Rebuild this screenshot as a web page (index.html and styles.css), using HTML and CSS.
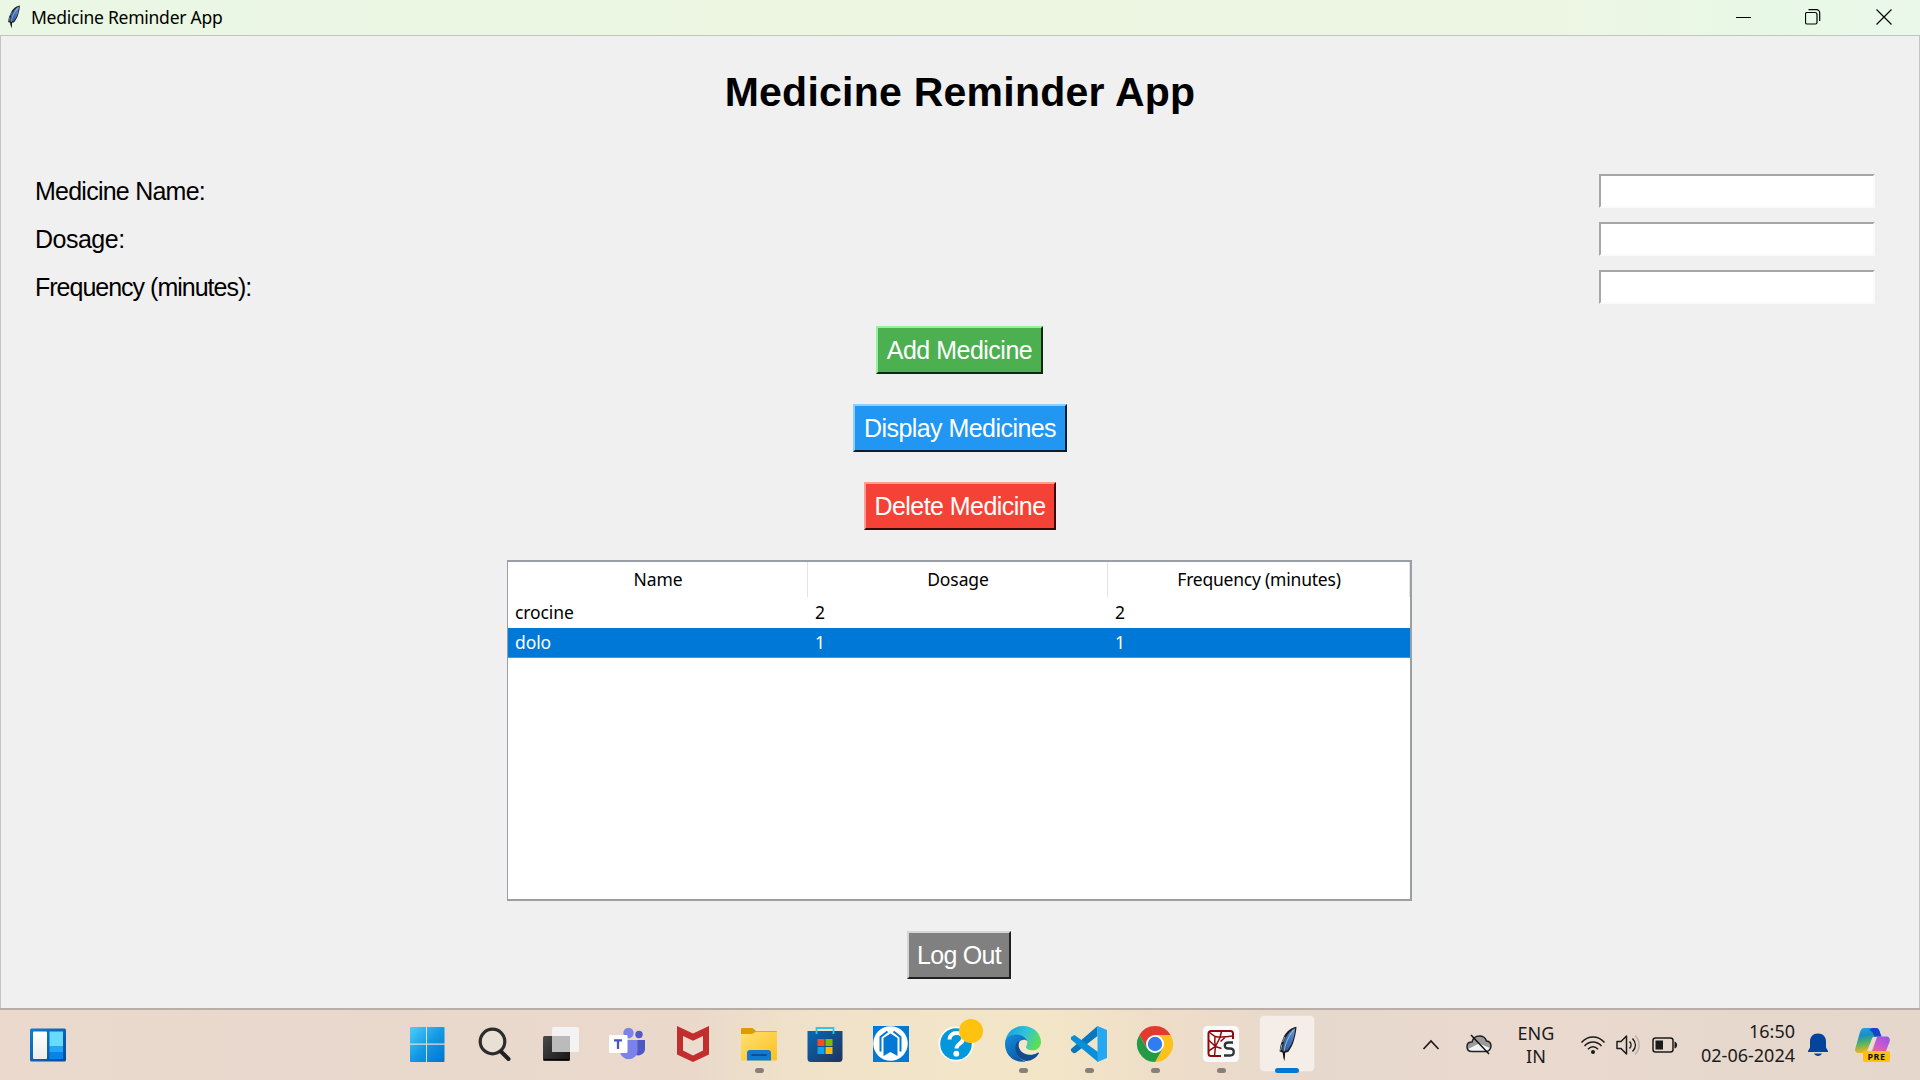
FILE: index.html
```html
<!DOCTYPE html>
<html lang="en">
<head>
<meta charset="utf-8">
<title>Medicine Reminder App</title>
<link rel="stylesheet" href="styles.css">
</head>
<body>
<svg width="0" height="0" class="defs" aria-hidden="true">
  <defs>
    <linearGradient id="gFeather" x1="1" y1="0" x2="0" y2="1"><stop offset="0" stop-color="#6b9bd0"/><stop offset=".5" stop-color="#3c74b8"/><stop offset="1" stop-color="#2b5590"/></linearGradient>
    <symbol id="feather" viewBox="0 0 20 36">
      <path d="M18.500.8C13 1.800 8 5.500 5.500 11.500 3 16.500 2 21 1.600 25.500l3 1 1.600 8.500 1-8.500 3-.5c2.800-4 5-8 6-12.500C17.500 9 18.200 5 18.500.8Z" fill="#1b1d22"/>
      <path d="M17.200 2.300C11.800 5 8 10 6 15.500L3.800 24.300l5.400.2c2.800-3.500 4.800-7.500 6-11.500 1-3.500 1.700-7 2-10.700Z" fill="url(#gFeather)"/>
      <path d="M15.500 4C10 11 7 18 5.800 27M2.500 24.500l1.500-6M4.500 16l2.500-5" fill="none" stroke="#c6cbd2" stroke-width=".8"/>
      <path d="M4.600 25.500 6.200 35l1.100-9.500Z" fill="#111"/>
    </symbol>
  </defs>
</svg>
<div class="screen">
  <header class="titlebar">
    <svg class="title-icon" viewBox="0 0 20 36" preserveAspectRatio="none"><use href="#feather"/></svg>
    <span class="title-text">Medicine Reminder App</span>
    <div class="window-controls">
      <svg width="16" height="16" viewBox="0 0 16 16"><path d="M0 8.500h15" stroke="#000" fill="none"/></svg>
      <svg width="16" height="16" viewBox="0 0 16 16"><path d="M2 3.500h8a2 2 0 0 1 2 2v8a1.500 1.500 0 0 1-1.500 1.500H2A1.500 1.500 0 0 1 .5 13.500V5A1.500 1.500 0 0 1 2 3.500ZM3.500.7H11.500A3.200 3.200 0 0 1 14.700 4v8" stroke="#000" stroke-width="1.200" fill="none"/></svg>
      <svg width="16" height="16" viewBox="0 0 16 16"><path d="m.5.5 15 15m0-15-15 15" stroke="#000" stroke-width="1.200" fill="none"/></svg>
    </div>
  </header>

  <main class="window">
    <h1 class="heading">Medicine Reminder App</h1>
    <form class="fields">
      <label class="field"><span class="label-name">Medicine Name:</span><input type="text"></label>
      <label class="field"><span class="label-dosage">Dosage:</span><input type="text"></label>
      <label class="field"><span class="label-frequency">Frequency (minutes):</span><input type="text"></label>
    </form>
    <div class="actions">
      <button class="btn add">Add Medicine</button>
      <button class="btn display">Display Medicines</button>
      <button class="btn delete">Delete Medicine</button>
    </div>
    <div class="table">
      <div class="row head"><div>Name</div><div>Dosage</div><div class="col-frequency">Frequency (minutes)</div></div>
      <div class="row"><div>crocine</div><div>2</div><div>2</div></div>
      <div class="row selected"><div>dolo</div><div>1</div><div>1</div></div>
    </div>
    <button class="btn logout">Log Out</button>
  </main>

  <footer class="taskbar">
    <div class="widgets">
      <svg width="36" height="34" viewBox="0 0 36 34">
        <defs><linearGradient id="gw" x1="0" y1="0" x2="1" y2="1"><stop offset="0" stop-color="#0a7fd8"/><stop offset="1" stop-color="#0b4a94"/></linearGradient><linearGradient id="gw2" x2="0" y2="1"><stop offset="0" stop-color="#fff"/><stop offset="1" stop-color="#ebebeb"/></linearGradient></defs>
        <rect width="36" height="33" y=".5" rx="1.500" fill="url(#gw)"/><rect x="3" y="3.500" width="14" height="27.500" rx="1" fill="url(#gw2)"/>
        <path d="M19.500 3.500h13.500v15H19.500Z" fill="#67dbff"/><path d="M19.500 18.500h13.500v6H19.500Z" fill="#20a7fb"/><path d="M19.500 24.500h13.500v6.500H19.500Z" fill="#0883ea"/>
      </svg>
    </div>
    <nav class="apps">
      <div class="app"><svg viewBox="0 0 36 36"><defs><linearGradient id="gs" x1="0" y1="0" x2="36" y2="36" gradientUnits="userSpaceOnUse"><stop offset="0" stop-color="#4fd2fe"/><stop offset=".5" stop-color="#149be4"/><stop offset="1" stop-color="#0072d0"/></linearGradient></defs><path d="M2 1h15v16.500H1V2a1 1 0 0 1 1-1ZM18 1h16.500a1 1 0 0 1 1 1v15.500H18ZM1 18.700h16V36H2a1 1 0 0 1-1-1ZM18 18.700h17.500V35a1 1 0 0 1-1 1H18Z" fill="url(#gs)"/></svg></div>
      <div class="app"><svg viewBox="0 0 36 36"><circle cx="15.500" cy="15.500" r="12.300" fill="#e8dfd5" stroke="#2c2c2c" stroke-width="3.200"/><path d="M24 25.500 31.500 33" stroke="#202020" stroke-width="4" stroke-linecap="round"/></svg></div>
      <div class="app"><svg viewBox="0 0 36 36"><defs><linearGradient id="gt" x1="0" y1="0" x2="1" y2="1"><stop offset="0" stop-color="#4a4a4a"/><stop offset="1" stop-color="#151515"/></linearGradient></defs><rect y="10" width="27" height="25" rx="1.500" fill="url(#gt)"/><path d="M1 33.500h25" stroke="#000"/><rect x="9" y="1" width="27" height="25" rx="1.500" fill="#f3f3f3"/><path d="M9 10h18v16H9Z" fill="#bbb"/></svg></div>
      <div class="app"><svg viewBox="0 0 36 36"><circle cx="30" cy="8.500" r="3.700" fill="#5059c9"/><path d="M25 14h11v9a6.500 6.500 0 0 1-11 4.500Z" fill="#4f57c4"/><circle cx="19.500" cy="7" r="5.200" fill="#7b83eb"/><path d="M11 14h17.500v11.500a8.800 8.800 0 0 1-17.500 0Z" fill="#7b83eb"/><rect x="0" y="9" width="18.500" height="18" rx="1.200" fill="#fff"/><path d="M5 14.300h8M9 14.300V23" stroke="#4b53bc" stroke-width="2.300"/></svg></div>
      <div class="app"><svg viewBox="0 0 36 36"><path d="m2 0 16 7.500L34 0v28.500L18 36 2 28.500Z" fill="#c22d2d"/><path d="m8 10 10 4.800L28 10v14.600L18 29.500 8 24.600Z" fill="#ecdcce"/></svg></div>
      <div class="app running"><svg viewBox="0 0 36 36"><defs><linearGradient id="gf" x2="1" y2="1"><stop offset="0" stop-color="#ffe071"/><stop offset="1" stop-color="#fcc021"/></linearGradient></defs><path d="M0 3a1 1 0 0 1 1-1h10.500L15 5h20a1 1 0 0 1 1 1v3H0Z" fill="#dd9b05"/><path d="M0 8h11l4-2.200h21V33.500a1 1 0 0 1-1 1H1a1 1 0 0 1-1-1Z" fill="url(#gf)"/><path d="M6 34.500V27a3 3 0 0 1 3-3h18a3 3 0 0 1 3 3v7.500Z" fill="#0f7bd0"/><path d="M11 29h14" stroke="#0b4f97" stroke-width="1.800" stroke-linecap="round"/></svg></div>
      <div class="app"><svg viewBox="0 0 36 36"><defs><linearGradient id="gst" x1="0" y1="0" x2="1" y2="1"><stop offset="0" stop-color="#0768b9"/><stop offset="1" stop-color="#213258"/></linearGradient></defs><path d="M.5 5h35v27.500a3.500 3.500 0 0 1-3.500 3.500H4a3.500 3.500 0 0 1-3.500-3.500Z" fill="url(#gst)"/><path d="M9.500 8V2h17v6" fill="none" stroke="#30c5f0" stroke-width="1.800"/><path d="M10.500 13h7v7h-7Z" fill="#f25022"/><path d="M18.500 13h7v7h-7Z" fill="#80bb01"/><path d="M10.500 21h7v7h-7Z" fill="#01a5f0"/><path d="M18.500 21h7v7h-7Z" fill="#ffb902"/></svg></div>
      <div class="app"><svg viewBox="0 0 36 36"><path d="M0 0h36v36H0Z" fill="#0078d6"/><circle cx="17.500" cy="17.500" r="17.300" fill="#fff"/><path d="m17.500 7.500 7 4.500v18l-7-4-7 4V12Z" fill="#0078d6"/><path d="m14.500 5.500-7 5.500v14.500M20.500 5.500l7 5.500v14.500" stroke="#0078d6" stroke-width="2" fill="none"/></svg></div>
      <div class="app help"><svg viewBox="0 0 36 36"><circle cx="17" cy="18" r="17.500" fill="#fff"/><circle cx="17" cy="18" r="15.800" fill="#0398dc"/><path d="M10.500 13.500c0-4 3-6.500 7.200-6.500 4 0 6.500 2.300 6.500 5.500 0 5-6.500 5-6.700 10" fill="none" stroke="#fff" stroke-width="4"/><circle cx="17.300" cy="27.700" r="2.900" fill="#fff"/></svg><i class="badge"></i></div>
      <div class="app running"><svg viewBox="0 0 36 36"><defs><linearGradient id="ge" x1="0" y1=".2" x2="1" y2=".6"><stop offset="0" stop-color="#169ede"/><stop offset=".5" stop-color="#2fc2df"/><stop offset="1" stop-color="#5fe04c"/></linearGradient><linearGradient id="ge2" x1="0" y1="0" x2=".6" y2="1"><stop offset="0" stop-color="#168ee0"/><stop offset="1" stop-color="#0c59a4"/></linearGradient></defs><path d="M0 17C1 7 8 0 18 0c11 0 18 8 18 16 0 5-4 8.500-9 8.500-3.500 0-6-1.500-6-3 0-1 1.500-2 1.500-4.500 0-4-5-7.500-11-7.500C5.500 9.500 1.500 12.500 0 17Z" fill="url(#ge)"/><path d="M0 18C0 12 5 8.500 10.500 8.500c7 0 12 4 12 8.500 0 2-1 3-1.500 4-1-3-4-4.500-7-3-3 1.800-4 5.500-2 10 1.500 3.800 5 6.500 9 7.500C8 37.500 0 28.500 0 18Z" fill="url(#ge2)"/><path d="M13.500 15C9 18 9.500 27 14 31.500c6 6 15 3.500 19.500-3.500.8-1.200.2-1.700-1-1.200-8 3.700-18 .5-19-11.800Z" fill="#134b92"/><path d="M22.300 15.200c-2.500-2.300-6.500-1.500-8 1-1.800 4 .5 9 5 11.300 4.500 2 9.500 1.500 12.700-.8l2.500-3.500c-2 1.300-4.500 1.800-7.500 1.300-3.500-.5-6-1.500-6-3 0-1.200 1.800-2.500 1.300-6.300Z" fill="#f3e6cb"/></svg></div>
      <div class="app running"><svg viewBox="0 0 36 36"><path d="M26.500 0v10L4.500 27 2.500 27.300 0 25v-2L26.500 0Z" fill="#0877bd"/><path d="M0 11 3.500 9 27 26v10L0 13.500Z" fill="#098fd7"/><path d="m26.500 0 9.500 4v28l-9.500 4Z" fill="#26a7f2"/></svg></div>
      <div class="app running"><svg viewBox="0 0 36 36"><path d="M18 9h15.600A18 18 0 0 1 18 36l7.800-13.500Z" fill="#fcc21b"/><path d="M18 9h15.600A18 18 0 0 0 2.400 9l7.800 13.500Z" fill="#e23a2e"/><path d="M2.400 9 10.200 22.500 25.800 22.500 18 36A18 18 0 0 1 2.400 9Z" fill="#249a46"/><circle cx="18" cy="18" r="9" fill="#fff"/><circle cx="18" cy="18" r="7.200" fill="#2f7df0"/></svg></div>
      <div class="app running"><svg viewBox="0 0 36 36"><rect width="36" height="36" rx="4.500" fill="#fbfafa"/><path d="M30 13V7.500A2.300 2.300 0 0 0 27.700 5H8A2.500 2.500 0 0 0 5.500 7.500v20A2.500 2.500 0 0 0 8 30h10" fill="none" stroke="#8f0b0b" stroke-width="2"/><path d="M6 6l6 4.500c5 1 11 .5 17.500-.5M12 10.500c-.5 4-.5 7 .5 10M5.500 14l7 6.500-7 4.500M18.500 5.500l-1.500 6-4.500 9 6 2M12.500 20.500l-1 9M23 10.500l-5.500 5" fill="none" stroke="#8f0b0b" stroke-width="1.500"/><path d="M30 16.500h-4.500c-5 0-5 6 0 6h1.500c5 0 5 7 0 7h-6" fill="none" stroke="#2d3338" stroke-width="2.300"/></svg></div>
      <div class="app active"><svg viewBox="0 0 36 36"><use href="#feather" x="9" y="0" width="20" height="36"/></svg></div>
    </nav>
    <div class="tray">
      <svg class="chev" width="18" height="12" viewBox="0 0 18 12"><path d="m1.500 10 7.500-8 7.500 8" fill="none" stroke="#1b1b1b" stroke-width="1.700"/></svg>
      <svg class="cloud" width="26" height="22" viewBox="0 0 26 22"><path d="M6 8C7 4 10 2 13.500 2s6 2 7 5c3 .3 4.500 2.500 4.500 5s-2 5.500-5 5.500H6c-3 0-5-2-5-4.800S3 8 6 8Z" fill="#9b9b9b"/><path d="m2 15 11-5.500L24 14c-1 2-2.500 3.500-4.500 3.500H6c-2 0-3.500-1-4-2.500Z" fill="#f3f3f3"/><path d="M6 8C7 4 10 2 13.500 2s6 2 7 5c3 .3 4.500 2.500 4.500 5s-2 5.500-5 5.500H6c-3 0-5-2-5-4.800S3 8 6 8Z" fill="none" stroke="#222" stroke-width="1.500"/><path d="m5 1 18 19" stroke="#111" stroke-width="1.500"/></svg>
      <div class="lang"><span>ENG</span><span>IN</span></div>
      <svg class="wifi" width="26" height="20" viewBox="0 0 26 20"><path d="M1.500 7.500c6.500-7.300 16.500-7.300 23 0M4.500 11c5-5.300 12-5.300 17 0M8 14.200c3-3.300 7-3.300 10 0" fill="none" stroke="#1b1b1b" stroke-width="1.500"/><circle cx="13" cy="17" r="2" fill="#1b1b1b"/></svg>
      <svg class="sound" width="25" height="22" viewBox="0 0 25 22"><path d="M1 7.500h4L10.500 2v18L5 14.500H1Z" fill="none" stroke="#1b1b1b" stroke-width="1.500" stroke-linejoin="round"/><path d="M13.500 7.500c2 2 2 5 0 7M16.500 4.500c3.800 4 3.800 9 0 13" fill="none" stroke="#1b1b1b" stroke-width="1.500"/><path d="M19 1.500c5.500 5.500 5.500 13.500 0 19" fill="none" stroke="#b9aea8" stroke-width="1.500"/></svg>
      <svg class="battery" width="26" height="18" viewBox="0 0 26 18"><rect x="1" y="2" width="20" height="14" rx="2.500" fill="none" stroke="#1b1b1b" stroke-width="1.500"/><path d="M3.500 4.500h7.500v9H3.500Z" fill="#1b1b1b"/><path d="M22.500 5.500c3.500 1 3.500 6 0 7Z" fill="#1b1b1b"/></svg>
      <div class="clock"><span>16:50</span><span>02-06-2024</span></div>
      <svg class="bell" width="20" height="24" viewBox="0 0 20 24"><path d="M10 .5c5 0 8 3.500 8 8v6l2 3.500v1H0v-1l2-3.500v-6C2 4 5 .5 10 .5ZM6 20.500h8c-.8 1.500-2 2.500-4 2.500s-3.200-1-4-2.500Z" fill="#04449c"/></svg>
      <div class="copilot">
        <svg width="36" height="34" viewBox="0 0 36 34"><defs><linearGradient id="c1" x2=".2" y2="1"><stop offset="0" stop-color="#1ba5ee"/><stop offset=".35" stop-color="#1b8fc2"/><stop offset=".65" stop-color="#56b45e"/><stop offset="1" stop-color="#f3b813"/></linearGradient><linearGradient id="c2" x1="1" y1="0" x2=".3" y2="1"><stop offset="0" stop-color="#9055ed"/><stop offset=".5" stop-color="#c759cf"/><stop offset="1" stop-color="#f6707a"/></linearGradient></defs>
        <path d="M9 0h12c3 0 3.500 3 4.500 6l1 2.500-9 1L13 22c-.7 2-2 3-4 3H4c-3.500 0-4.500-2-3.500-5L5 4C6 1.500 7 0 9 0Z" fill="url(#c1)"/><path d="M17 0h4c3 0 3.500 3 4.500 6l1 2.500h-7C18 5 17 3 14 2Z" fill="#1545c8"/><path d="M21 8.500h10c3.500 0 4.500 2.500 3.500 5.500L31 23c-1 3-2.500 4-5 4H12c3-1 4-3 5-6Z" fill="url(#c2)"/><path d="M18 9h4l-5 14H12Z" fill="#eadcd2"/></svg>
        <b class="pre">PRE</b>
      </div>
    </div>
  </footer>
</div>
</body>
</html>
```
FILE: styles.css
```css
* { box-sizing: border-box; }
body { margin: 0; overflow: hidden; font-family: "Noto Sans", sans-serif; color: #000; }
.defs { display: block; height: 0; }
.screen { width: 1920px; height: 1080px; display: flex; flex-direction: column; }

.titlebar { height: 35px; flex: none; display: flex; align-items: center; padding-left: 7px; background: linear-gradient(90deg, #e9f7e4, #edf6e1 50%, #edf6e3 80%, #e8f8e6 92%, #e9f8e9); }
.title-icon { width: 14px; height: 24px; margin-top: -2px; }
.title-text { margin: -1px 0 0 10px; font-size: 17.5px; letter-spacing: -.25px; white-space: nowrap; }
.window-controls { margin-left: auto; margin-right: 28px; display: flex; gap: 53px; margin-top: -2px; }
.window-controls svg:last-child { margin-left: 2px; }

.window { flex: 1; display: flex; flex-direction: column; align-items: center; background: #f0f0f0; border: 1px solid #c3c5c3; border-bottom: 0; }
.heading { margin: 31px 0 0; height: 50px; font: bold 41px/51px "Liberation Sans", sans-serif; letter-spacing: .25px; white-space: nowrap; }
.fields { align-self: stretch; margin: 57px 44px 0 34px; display: flex; flex-direction: column; gap: 14px; }
.field { height: 34px; display: flex; align-items: center; justify-content: space-between; font: 25px/36px "Liberation Sans", sans-serif; }
.field input { width: 276px; height: 34px; padding: 0 6px; border: 2px solid; border-color: #a6a6a6 #fafafa #fafafa #a6a6a6; border-radius: 0; outline: 0; background: #fff; }
.label-name { letter-spacing: -.76px; }
.label-dosage { letter-spacing: -.5px; }
.label-frequency { letter-spacing: -1px; }
.actions { margin-top: 22px; display: flex; flex-direction: column; align-items: center; gap: 30px; }
.btn { height: 48px; padding: 0; border: 2px solid; display: flex; align-items: center; justify-content: center; font: 25px/44px "Liberation Sans", sans-serif; letter-spacing: -.55px; color: #fff; white-space: nowrap; }
.add { width: 167px; margin-right: 1px; letter-spacing: -.5px; background: #4caf50; border-color: #97f09b #102811 #102811 #97f09b; }
.display { width: 214px; background: #2196f3; border-color: #8bcfff #071e31 #071e31 #8bcfff; }
.delete { width: 192px; background: #f44336; border-color: #ff9d96 #310d0b #310d0b #ff9d96; }
.logout { width: 104px; margin: 30px 2px 0 0; letter-spacing: -.7px; background: #808080; border-color: #d6d6d6 #202020 #202020 #d6d6d6; }

.table { width: 905px; height: 341px; margin: 30px 1px 0 0; background: #fff; border: 2px solid #9a9fa7; border-left-width: 1px; font-size: 17.5px; }
.row { display: grid; grid-template-columns: 300px 300px 1fr; height: 30px; line-height: 28px; letter-spacing: -.1px; }
.row > div { padding-left: 7px; }
.head { height: 36px; line-height: 34px; text-align: center; }
.head > div { height: 35px; padding: 0 0 0 1px; border-right: 1px solid #e3e3e3; }
.head .col-frequency { letter-spacing: -.22px; }
.selected { background: #0078d7; color: #fff; border-bottom: 1px solid #3d98e0; }

.taskbar { height: 72px; flex: none; display: flex; align-items: center; border-top: 2px solid #b9aea6; background: linear-gradient(90deg, #ead9cc 0, #e8d8cd 15%, #ead9cb 36%, #f0e2c9 42%, #f3e6c7 54%, #eddcc9 62%, #e7d8cd 68%, #e9d9cf 80%, #e5d7cc 100%); }
.widgets { width: 393px; padding-left: 30px; }
.widgets svg { display: block; }
.apps { display: grid; grid-template-columns: 69px repeat(13, 66px); height: 70px; }
.app { position: relative; display: flex; align-items: center; justify-content: center; }
.app svg { width: 36px; height: 36px; margin-top: -2px; overflow: visible; }
.app:first-child svg { margin-right: 1px; }
.running::after, .active::after { content: ""; position: absolute; bottom: 7px; width: 9px; height: 5px; border-radius: 3px; background: #87807a; }
.active::before { content: ""; position: absolute; inset: 5px 5px 8px 5px; border-radius: 5px; background: #f5ede7; border: 1px solid #eadfd8; }
.active svg { position: relative; }
.active::after { width: 24px; background: #0078d7; }
.badge { position: absolute; left: 35px; top: 9px; width: 24px; height: 24px; border-radius: 50%; background: #ffc20e; }
.tray { flex: 1; display: flex; align-items: center; height: 70px; padding: 0 0 1px 102px; color: #1b1b1b; font-size: 18px; }
.tray > svg { flex: none; }
.cloud { margin-left: 26px; }
.lang { width: 50px; margin-left: 19px; display: flex; flex-direction: column; align-items: center; line-height: 23px; }
.wifi { margin-left: 19px; }
.sound { margin-left: 10px; }
.battery { margin-left: 11px; }
.clock { width: 117px; margin-top: -3px; display: flex; flex-direction: column; align-items: flex-end; line-height: 24px; white-space: nowrap; }
.bell { margin-left: 13px; }
.copilot { position: relative; margin-left: 27px; }
.copilot svg { display: block; }
.pre { position: absolute; left: 8px; top: 23px; width: 27px; height: 11px; border-radius: 2px; background: #ffc20a; color: #111; font-size: 9px; line-height: 11px; text-align: center; letter-spacing: .5px; }
```
